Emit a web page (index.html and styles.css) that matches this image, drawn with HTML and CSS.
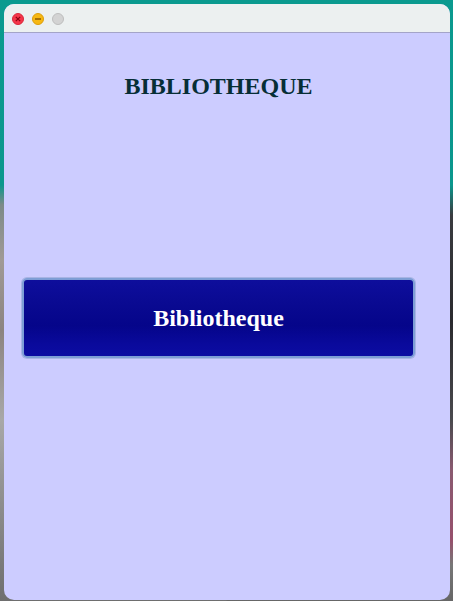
FILE: index.html
```html
<!DOCTYPE html>
<html>
<head>
<meta charset="utf-8">
<link rel="stylesheet" href="styles.css">
</head>
<body>
<div class="window">
  <div class="titlebar">
    <span class="light close"><svg viewBox="0 0 12 12" width="12" height="12"><path d="M3.8 3.8L8.2 8.2M8.2 3.8L3.8 8.2" stroke="#8a0010" stroke-width="1.2"/></svg></span>
    <span class="light minimize"><svg viewBox="0 0 12 12" width="12" height="12"><path d="M3 6H9" stroke="#8a5a00" stroke-width="1.6"/></svg></span>
    <span class="light zoom"></span>
  </div>
  <div class="content">
    <h1 class="heading">BIBLIOTHEQUE</h1>
    <button class="main-btn">Bibliotheque</button>
  </div>
</div>
</body>
</html>
```
FILE: styles.css
```css
html, body {
  margin: 0;
  height: 100%;
}
body {
  width: 453px;
  height: 601px;
  overflow: hidden;
  box-sizing: border-box;
  padding: 4px 3px 0 4px;
  background:
    linear-gradient(to bottom, #0a9a8f 0, #0b978d 185px, #7d8a88 205px, #a09a96 260px, #8c8480 330px, #a8a8a8 420px, #888 520px, #6e6e6e 601px) left top / 50% 100% no-repeat,
    linear-gradient(to bottom, #0a9a8f 0, #0b978d 185px, #3a3c40 215px, #2a2a2e 320px, #4a4a4e 420px, #8a5a70 470px, #96506c 540px, #777 565px, #666 601px) left top / 100% 100% no-repeat;
  font-family: "Liberation Serif", "Times New Roman", serif;
}
.window {
  width: 446px;
  height: 596px;
  background: #ccccff;
  border-radius: 10px;
  overflow: hidden;
  display: flex;
  flex-direction: column;
}
.titlebar {
  height: 27px;
  flex: none;
  background: #ecf0f0;
  border-bottom: 1px solid #a4a4c8;
  display: flex;
  align-items: center;
  gap: 8px;
  padding-left: 8px;
  padding-top: 1px;
}
.light {
  width: 12px;
  height: 12px;
  border-radius: 50%;
  box-sizing: border-box;
  display: flex;
}
.close {
  background: #f5364a;
  border: 1px solid #d8283a;
}
.close svg, .minimize svg {
  margin: -1px;
}
.minimize {
  background: #f7b813;
  border: 1px solid #dc9d0a;
}
.zoom {
  background: #d3d3d3;
  border: 1px solid #bdbdbd;
}
.content {
  flex: 1;
  display: flex;
  flex-direction: column;
  align-items: flex-start;
  padding-left: 18px;
}
.heading {
  width: 393px;
  margin: 39px 0 0 0;
  text-align: center;
  font-size: 24px;
  line-height: 28px;
  font-weight: bold;
  color: #062e36;
}
.main-btn {
  margin-top: 178px;
  width: 393px;
  height: 80px;
  border: 2px solid #7e9ed6;
  border-radius: 5px;
  background: linear-gradient(to bottom, #0e0e9c 0%, #090990 35%, #05058a 60%, #0a0a9c 85%, #0c0ca2 100%);
  color: #ffffff;
  font-family: "Liberation Serif", "Times New Roman", serif;
  font-size: 24px;
  font-weight: bold;
  padding: 0;
  box-shadow: 0 0 0 1px #a8b4e4;
}
```
